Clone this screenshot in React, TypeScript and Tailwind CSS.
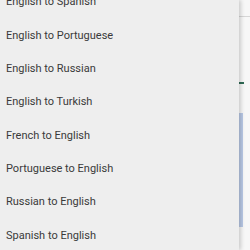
import React from "react";

const items = [
  "English to Spanish",
  "English to Portuguese",
  "English to Russian",
  "English to Turkish",
  "French to English",
  "Portuguese to English",
  "Russian to English",
  "Spanish to English",
];

export default function App() {
  return (
    <div className="relative w-[250px] h-[250px] overflow-hidden bg-[#f7f7f7]" style={{ fontFamily: "Roboto, sans-serif" }}>
      <div className="absolute left-[239px] top-[16px] w-[11px] h-px bg-[#d6d6d6]" />
      <div className="absolute left-[239px] top-[82px] w-[5px] h-[2px] bg-[#2f6b55]" />
      <div className="absolute left-[239px] top-[113px] w-[4px] h-[114px] bg-[#b9c9e6]" />
      <div className="absolute left-0 top-0 w-[239px] h-[250px] bg-[#eeeeee] shadow-[2px_0_4px_rgba(0,0,0,0.18)]">
        <div className="mt-[-14px] flex flex-col">
          {items.map((t) => (
            <div key={t} className="h-[33.33px] flex items-center pl-[6px] text-[11px] text-[#3a3a3a]">
              {t}
            </div>
          ))}
        </div>
      </div>
    </div>
  );
}
